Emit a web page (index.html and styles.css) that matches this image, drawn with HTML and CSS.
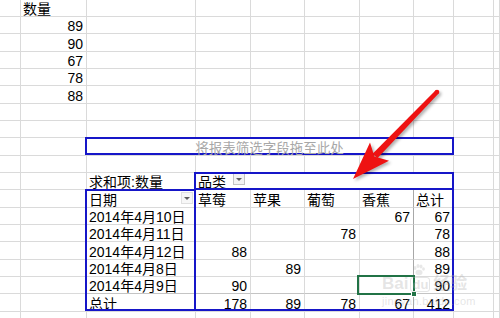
FILE: index.html
```html
<!DOCTYPE html>
<html lang="zh-CN">
<head>
<meta charset="utf-8">
<title>数据透视表</title>
<link rel="stylesheet" href="styles.css">
</head>
<body>
<div class="wrap">
  <div class="grid sheet">
    <div></div><div>数量</div><div></div><div></div><div></div><div></div><div></div><div></div><div></div><div></div>
    <div></div><div class="n">89</div><div></div><div></div><div></div><div></div><div></div><div></div><div></div><div></div>
    <div></div><div class="n">90</div><div></div><div></div><div></div><div></div><div></div><div></div><div></div><div></div>
    <div></div><div class="n">67</div><div></div><div></div><div></div><div></div><div></div><div></div><div></div><div></div>
    <div></div><div class="n">78</div><div></div><div></div><div></div><div></div><div></div><div></div><div></div><div></div>
    <div></div><div class="n">88</div><div></div><div></div><div></div><div></div><div></div><div></div><div></div><div></div>
    <div></div><div></div><div></div><div></div><div></div><div></div><div></div><div></div><div></div><div></div>
    <div></div><div></div><div></div><div></div><div></div><div></div><div></div><div></div><div></div><div></div>
    <div></div><div></div><div></div><div></div><div></div><div></div><div></div><div></div><div></div><div></div>
    <div></div><div></div><div></div><div></div><div></div><div></div><div></div><div></div><div></div><div></div>
    <div></div><div></div><div>求和项:数量</div><div class="nv">品类<span class="dd"></span></div><div class="nv"></div><div class="nv"></div><div class="nv"></div><div></div><div></div><div></div>
    <div></div><div></div><div>日期<span class="dd dd-r"></span></div><div>草莓</div><div>苹果</div><div>葡萄</div><div class="dk">香蕉</div><div>总计</div><div></div><div></div>
    <div></div><div></div><div>2014年4月10日</div><div></div><div></div><div></div><div class="n dk">67</div><div class="n">67</div><div></div><div></div>
    <div></div><div></div><div>2014年4月11日</div><div></div><div></div><div class="n">78</div><div class="dk"></div><div class="n">78</div><div></div><div></div>
    <div></div><div></div><div>2014年4月12日</div><div class="n">88</div><div></div><div></div><div class="dk"></div><div class="n">88</div><div></div><div></div>
    <div></div><div></div><div>2014年4月8日</div><div></div><div class="n">89</div><div></div><div class="dk"></div><div class="n">89</div><div></div><div></div>
    <div></div><div></div><div class="sb">2014年4月9日</div><div class="n sb">90</div><div class="sb"></div><div class="sb"></div><div class="dk sb"></div><div class="n sb">90</div><div></div><div></div>
    <div></div><div></div><div>总计</div><div class="n">178</div><div class="n">89</div><div class="n">78</div><div class="n dk">67</div><div class="n">412</div><div></div><div></div>
    <div></div><div></div><div></div><div></div><div></div><div></div><div></div><div></div><div></div><div></div>
  </div>
  <div class="grid overlay">
    <div class="filter">将报表筛选字段拖至此处</div>
    <div class="pbox prow"></div>
    <div class="pbox pcol"></div>
    <div class="hline"></div>
    <div class="sel"></div>
    <svg class="arrow" viewBox="0 0 500 318" width="500" height="318">
      <circle cx="437" cy="92" r="2.3" fill="#ee1212"/>
      <polygon points="435.4,90.4 438.6,93.6 377.4,158.3 372.6,153.7" fill="#ee1212"/>
      <polygon points="353,179 370,142.6 374.4,156.4 389,160.8" fill="#ee1212"/>
    </svg>
    <div class="wm">
      <svg class="paw" viewBox="0 0 14 12" width="14" height="12">
        <ellipse cx="3" cy="4" rx="1.5" ry="2"/>
        <ellipse cx="6" cy="2" rx="1.5" ry="2"/>
        <ellipse cx="9" cy="2.5" rx="1.5" ry="2"/>
        <ellipse cx="11.5" cy="5" rx="1.4" ry="1.8"/>
        <ellipse cx="7" cy="8.5" rx="3.5" ry="2.8"/>
      </svg>
      <div class="wm-logo">Bai<span class="wm-du">du</span>经验</div>
      <div class="wm-url">jingyan.baidu.com</div>
    </div>
  </div>
</div>
</body>
</html>
```

FILE: styles.css
```css
html, body {
  margin: 0;
  padding: 0;
  background: #ffffff;
}

body {
  width: 500px;
  height: 318px;
  overflow: hidden;
}

.wrap {
  position: relative;
  width: 500px;
  height: 318px;
  overflow: hidden;
}

.grid {
  display: grid;
  grid-template-columns: 21px 66px 109px 55px 54px 55px 54px 40px 40px 1fr;
  grid-template-rows: repeat(7, 17px 17px 18px);
}

.sheet {
  font-family: "Liberation Sans Narrow", "Liberation Sans", "Noto Sans CJK SC", sans-serif;
  font-size: 14px;
  color: #000000;
}

.sheet > div {
  box-sizing: border-box;
  border-right: 1px solid #dadada;
  border-bottom: 1px solid #dadada;
  display: flex;
  align-items: flex-end;
  padding: 0 3px 0 2px;
  line-height: 13px;
  white-space: nowrap;
  overflow: hidden;
  min-width: 0;
}

.sheet > div.n {
  justify-content: flex-end;
}

.sheet > div.nv {
  border-right-color: transparent;
}

.sheet > div.dk {
  border-right-color: #a8a8a8;
}

.sheet > div.sb {
  border-bottom-color: #c4c4c4;
}

.dd {
  box-sizing: border-box;
  width: 12px;
  height: 12px;
  border: 1px solid #c4c4c4;
  background: #f3f3f3;
  align-self: flex-start;
  margin-left: 7px;
  display: flex;
  align-items: center;
  justify-content: center;
}

.dd::before {
  content: "";
  width: 0;
  height: 0;
  border-left: 3px solid transparent;
  border-right: 3px solid transparent;
  border-top: 3px solid #606060;
}

.dd-r {
  margin-left: auto;
  margin-top: 2px;
  margin-right: -1px;
  border-color: #e0e0e0;
  background: #f7f7f7;
}

.overlay {
  position: absolute;
  left: 0;
  top: 0;
  right: 0;
  bottom: 0;
  pointer-events: none;
}

.filter {
  grid-column: 3 / 9;
  grid-row: 9;
  margin: -1px 0 1px -2px;
  border: 2px solid #1616c8;
  background: #ffffff;
  display: flex;
  align-items: center;
  justify-content: center;
  font-family: "Noto Sans CJK SC", sans-serif;
  font-size: 13.5px;
  line-height: 14px;
  color: #a8a8a8;
  padding-top: 1px;
}

.pbox {
  margin: -1px 0 1px -2px;
  border: 2px solid #1616c8;
}

.prow {
  grid-column: 3;
  grid-row: 12 / 19;
}

.pcol {
  grid-column: 4 / 9;
  grid-row: 11 / 19;
}

.hline {
  grid-column: 4 / 9;
  grid-row: 12;
  margin: -2px 0 0 -2px;
  border-top: 2px solid #1616c8;
}

.sel {
  grid-column: 7;
  grid-row: 17;
  margin: -2px -1px -1px -3px;
  border: 2px solid #217346;
  position: relative;
}

.sel::after {
  content: "";
  position: absolute;
  right: -4px;
  bottom: -4px;
  width: 4px;
  height: 4px;
  background: #217346;
  border: 1px solid #ffffff;
}

.arrow {
  position: absolute;
  left: 0;
  top: 0;
  filter: drop-shadow(2px 2px 1.5px rgba(0, 0, 0, 0.3));
}

.wm {
  position: absolute;
  left: 382px;
  top: 264px;
  width: 92px;
  display: flex;
  flex-direction: column;
  align-items: flex-start;
  color: rgba(180, 180, 180, 0.35);
}

.paw {
  margin-left: 30px;
  fill: rgba(180, 180, 180, 0.3);
}

.wm-logo {
  font-family: "Liberation Sans", "Noto Sans CJK SC", sans-serif;
  font-weight: bold;
  font-size: 17px;
  line-height: 16px;
  display: flex;
  align-items: center;
}

.wm-du {
  font-size: 13px;
  line-height: 13px;
  padding: 0 1px;
  margin: 0 3px 0 2px;
  border: 1px solid rgba(180, 180, 180, 0.35);
  border-radius: 3px;
}

.wm-url {
  font-family: "Liberation Sans", sans-serif;
  font-size: 11px;
  line-height: 12px;
  margin-top: 3px;
  letter-spacing: 0.3px;
}
```
